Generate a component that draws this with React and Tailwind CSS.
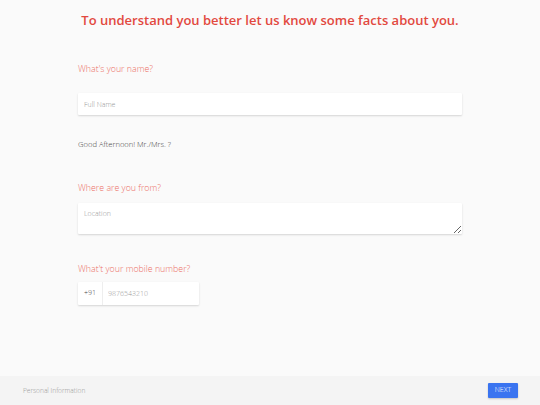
import React from "react";

export default function App() {
  return (
    <div
      className="w-[540px] h-[405px] bg-[#fafafa] flex flex-col overflow-hidden"
      style={{ fontFamily: '"Open Sans", sans-serif' }}
    >
      <div className="flex-1 flex flex-col">
        <h1 className="text-center text-[13px] leading-[20px] font-semibold text-[#e2493f] pt-[10px]">
          To understand you better let us know some facts about you.
        </h1>
        <div className="w-[384px] mx-auto mt-[32px] flex flex-col font-light">
          <label className="text-[8.8px] leading-[14px] text-[#ec6f66]">What's your name?</label>
          <input
            className="mt-[17px] h-[22px] bg-white px-[6px] text-[7px] font-light text-[#333] placeholder:text-[#999] outline-none shadow-[0_1px_2px_rgba(0,0,0,0.15)] rounded-[1px]"
            placeholder="Full Name"
          />
          <p className="mt-[23px] text-[7.6px] leading-[12px] text-[#444]">Good Afternoon! Mr./Mrs. ?</p>
          <label className="mt-[31px] text-[8.8px] leading-[14px] text-[#ec6f66]">Where are you from?</label>
          <textarea
            className="mt-[8px] h-[31px] bg-white px-[6px] pt-[6px] pb-[2px] text-[7px] leading-[10px] font-light text-[#333] placeholder:text-[#999] outline-none shadow-[0_1px_2px_rgba(0,0,0,0.15)] rounded-[1px] resize-y"
            placeholder="Location"
          />
          <label className="mt-[28px] text-[8.8px] leading-[14px] text-[#ec6f66]">What't your mobile number?</label>
          <div className="mt-[6px] w-[121px] h-[23px] bg-white flex items-center shadow-[0_1px_2px_rgba(0,0,0,0.15)] rounded-[1px]">
            <span className="w-[25px] h-full flex items-center justify-center text-[7px] text-[#444] border-r border-[#eee]">+91</span>
            <input
              className="flex-1 min-w-0 h-full px-[5px] text-[7px] font-light text-[#333] placeholder:text-[#999] outline-none bg-transparent"
              placeholder="9876543210"
            />
          </div>
        </div>
      </div>
      <div className="h-[29px] bg-[#f4f4f4] flex items-center justify-between pl-[23px] pr-[22px] font-light">
        <span className="text-[6.6px] text-[#999]">Personal Information</span>
        <button className="w-[30px] h-[15px] bg-[#3a74f0] text-white text-[7px] flex items-center justify-center rounded-[1px] shadow-[0_1px_2px_rgba(0,0,0,0.2)]">
          NEXT
        </button>
      </div>
    </div>
  );
}
